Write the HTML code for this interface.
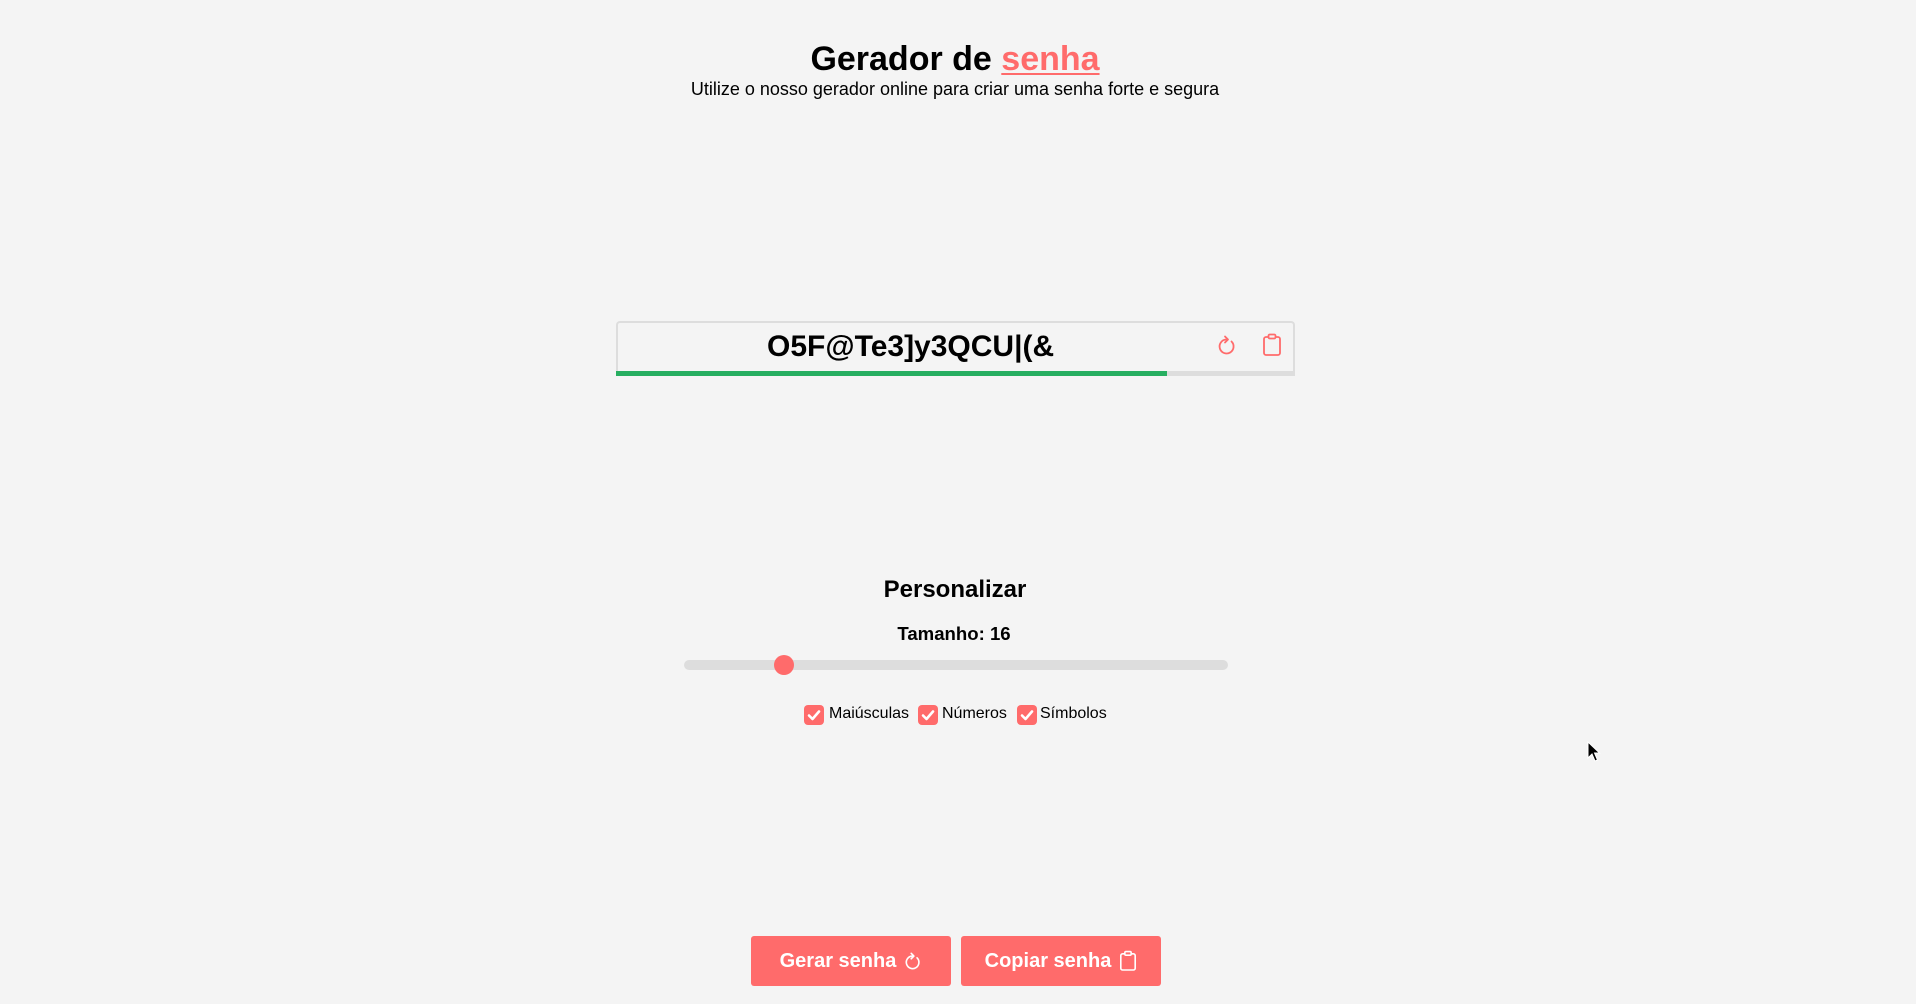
<!DOCTYPE html>
<html><head><meta charset="utf-8"><style>
html,body{margin:0;padding:0}
body{width:1916px;height:1004px;background:#f4f4f4;position:relative;overflow:hidden;font-family:"Liberation Sans",Arial,sans-serif;color:#000}
.c{position:absolute;left:-3px;width:1916px;text-align:center;white-space:nowrap}
h1{margin:0;font-size:34px;font-weight:bold}
h1 span{color:#ff6b6b;text-decoration:underline;text-decoration-thickness:2px;text-underline-offset:3px}
.box{position:absolute;left:616px;top:321px;width:675px;height:50px;border:2px solid #ddd;border-bottom:none;border-radius:4px 4px 0 0;background:#f4f4f4}
.bar{position:absolute;left:616px;top:371px;width:679px;height:5px;background:#ddd}
.bar div{width:551px;height:5px;background:#27ae60}
.pw{position:absolute;left:767px;top:327px;font-size:30px;font-weight:bold;line-height:40px}
.track{position:absolute;left:684px;top:660px;width:544px;height:10px;border-radius:5px;background:#ddd}
.thumb{position:absolute;left:774px;top:655px;width:20px;height:20px;border-radius:50%;background:#ff6b6b}
.cb{position:absolute;top:705px;width:20px;height:20px;border-radius:4px;background:#ff6b6b}
.lab{position:absolute;top:704px;font-size:16px;line-height:20px}
.btn{position:absolute;top:936px;width:200px;height:50px;background:#ff6b6b;border-radius:3px;color:#fff;font-weight:bold;font-size:20px;display:flex;align-items:center;justify-content:center;gap:8px}
</style></head><body>
<div class="c" style="top:38px;line-height:42px"><h1>Gerador de <span>senha</span></h1></div>
<div class="c" style="top:78px;font-size:18px;line-height:22px">Utilize o nosso gerador online para criar uma senha forte e segura</div>

<div class="box"></div>
<div class="bar"><div></div></div>
<div class="pw">O5F@Te3]y3QCU|(&amp;</div>
<svg style="position:absolute;left:1217px;top:334px" width="20" height="22" viewBox="0 0 20 22" fill="none" stroke="#ff6b6b" stroke-width="1.8" stroke-linecap="round" stroke-linejoin="round">
<path d="M14.5 7.5 A7 7 0 1 1 9 5.5"/><path d="M8 2.5 L11 5.5 L8 8.5"/></svg>
<svg style="position:absolute;left:1262px;top:333px" width="20" height="24" viewBox="0 0 20 24" fill="none" stroke="#ff6b6b" stroke-width="1.8" stroke-linejoin="round">
<rect x="2" y="4" width="16" height="18" rx="2"/><rect x="6.5" y="1.5" width="7" height="4" rx="1.2" fill="#f4f4f4"/></svg>

<div class="c" style="top:576px;font-size:24px;font-weight:bold;line-height:28px">Personalizar</div>
<div class="c" style="top:624px;font-size:18.6px;font-weight:bold;line-height:20px;left:-4px">Tamanho: 16</div>
<div class="track"></div><div class="thumb"></div>

<div class="cb" style="left:804px"><svg width="20" height="20" viewBox="0 0 20 20"><path d="M5 10.5 L8.5 14 L15 6.5" fill="none" stroke="#fff" stroke-width="2.6" stroke-linecap="round" stroke-linejoin="round"/></svg></div>
<div class="lab" style="left:829px">Maiúsculas</div>
<div class="cb" style="left:918px"><svg width="20" height="20" viewBox="0 0 20 20"><path d="M5 10.5 L8.5 14 L15 6.5" fill="none" stroke="#fff" stroke-width="2.6" stroke-linecap="round" stroke-linejoin="round"/></svg></div>
<div class="lab" style="left:942px">Números</div>
<div class="cb" style="left:1017px"><svg width="20" height="20" viewBox="0 0 20 20"><path d="M5 10.5 L8.5 14 L15 6.5" fill="none" stroke="#fff" stroke-width="2.6" stroke-linecap="round" stroke-linejoin="round"/></svg></div>
<div class="lab" style="left:1040px">Símbolos</div>

<div class="btn" style="left:751px">Gerar senha <svg width="18" height="20" viewBox="0 0 20 22" fill="none" stroke="#fff" stroke-width="1.8" stroke-linecap="round" stroke-linejoin="round"><path d="M14.5 7.5 A7 7 0 1 1 9 5.5"/><path d="M8 2.5 L11 5.5 L8 8.5"/></svg></div>
<div class="btn" style="left:961px">Copiar senha <svg width="18" height="22" viewBox="0 0 20 24" fill="none" stroke="#fff" stroke-width="1.8" stroke-linejoin="round"><rect x="2" y="4" width="16" height="18" rx="2"/><rect x="6.5" y="1.5" width="7" height="4" rx="1.2" fill="#ff6b6b"/></svg></div>

<svg style="position:absolute;left:1587px;top:741px" width="14" height="22" viewBox="0 0 14 22"><path d="M1 1 L1 17 L5 13 L8 20 L10.5 19 L7.5 12 L12.5 12 Z" fill="#000" stroke="#fff" stroke-width="1"/></svg>
</body></html>
